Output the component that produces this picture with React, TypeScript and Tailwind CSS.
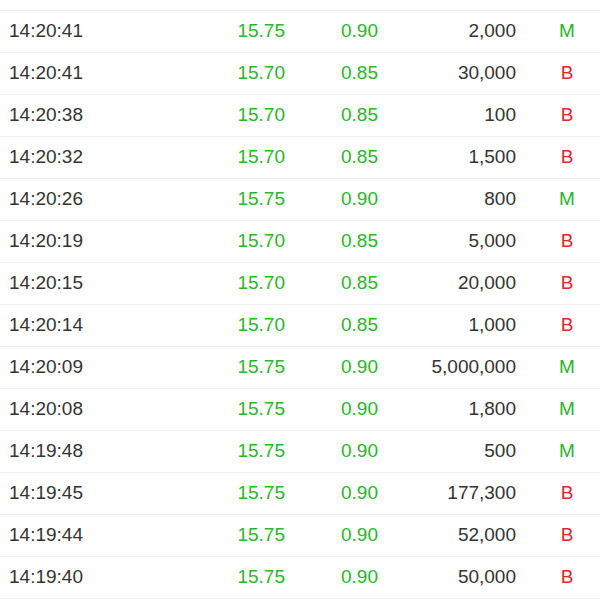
const trades = [
  { time: '14:20:41', price: '15.75', change: '0.90', volume: '2,000', side: 'M' },
  { time: '14:20:41', price: '15.70', change: '0.85', volume: '30,000', side: 'B' },
  { time: '14:20:38', price: '15.70', change: '0.85', volume: '100', side: 'B' },
  { time: '14:20:32', price: '15.70', change: '0.85', volume: '1,500', side: 'B' },
  { time: '14:20:26', price: '15.75', change: '0.90', volume: '800', side: 'M' },
  { time: '14:20:19', price: '15.70', change: '0.85', volume: '5,000', side: 'B' },
  { time: '14:20:15', price: '15.70', change: '0.85', volume: '20,000', side: 'B' },
  { time: '14:20:14', price: '15.70', change: '0.85', volume: '1,000', side: 'B' },
  { time: '14:20:09', price: '15.75', change: '0.90', volume: '5,000,000', side: 'M' },
  { time: '14:20:08', price: '15.75', change: '0.90', volume: '1,800', side: 'M' },
  { time: '14:19:48', price: '15.75', change: '0.90', volume: '500', side: 'M' },
  { time: '14:19:45', price: '15.75', change: '0.90', volume: '177,300', side: 'B' },
  { time: '14:19:44', price: '15.75', change: '0.90', volume: '52,000', side: 'B' },
  { time: '14:19:40', price: '15.75', change: '0.90', volume: '50,000', side: 'B' },
];

export default function App() {
  return (
    <div className="w-[600px] h-[600px] overflow-hidden bg-white font-['Liberation_Sans',Arial,sans-serif] text-[19px] text-[#333333]">
      <div className="h-[11px] border-b border-[#efefef]" />
      {trades.map((t, i) => (
        <div key={i} className="flex items-center h-[42px] border-b border-[#efefef]">
          <div className="w-[200px] shrink-0 pl-[9px]">{t.time}</div>
          <div className="w-[85px] shrink-0 text-right text-[#2bb52b]">{t.price}</div>
          <div className="w-[93px] shrink-0 text-right text-[#2bb52b]">{t.change}</div>
          <div className="w-[138px] shrink-0 text-right">{t.volume}</div>
          <div
            className={
              'w-[84px] shrink-0 pl-[18px] text-center ' +
              (t.side === 'M' ? 'text-[#2bb52b]' : 'text-[#d42a30]')
            }
          >
            {t.side}
          </div>
        </div>
      ))}
    </div>
  );
}
